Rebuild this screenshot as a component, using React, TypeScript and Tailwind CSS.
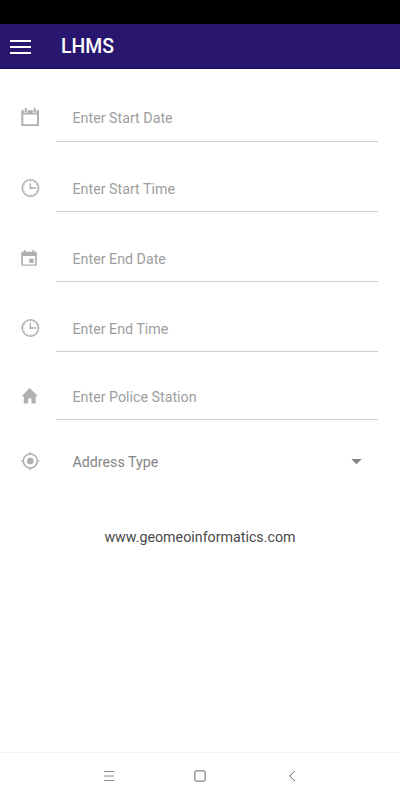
import type { ReactNode } from 'react';

const CalendarOutline = () => (
  <svg className="block h-[18px] w-[18px]" viewBox="0 0 18 18" fill="#b0b0b0">
    <path fillRule="evenodd" d="M.3 2.3H18V18H.3ZM2.3 6.5V16.2H16V6.5Z" />
    <path d="M2.8 1H6.8V5H2.8ZM11.6 1H15.6V5H11.6Z" fill="#fff" opacity=".7" />
    <path d="M3.8 0H5.8V4.2H3.8ZM12.6 0H14.6V4.2H12.6Z" />
  </svg>
);

const Clock = () => (
  <svg className="block h-[18px] w-[19px]" viewBox="0 0 19 18" fill="none" stroke="#b0b0b0">
    <circle cx="9.4" cy="9" r="8.2" strokeWidth="1.5" />
    <path d="M9.4 4.2V9H14.8" strokeWidth="1.4" />
    <circle cx="9.4" cy="9" r="1.1" fill="#b0b0b0" stroke="none" />
    <path
      d="M9.4 1.3V3M9.4 15V16.7M1.7 9H3.4M15.4 9H17.1M5.6 2.4L6.2 3.5M13.2 2.4L12.6 3.5M5.6 15.6L6.2 14.5M13.2 15.6L12.6 14.5M2.8 5.2L3.9 5.8M16 5.2L14.9 5.8M2.8 12.8L3.9 12.2M16 12.8L14.9 12.2"
      strokeWidth=".7"
    />
  </svg>
);

const CalendarEvent = () => (
  <svg className="block h-[16px] w-[16px]" viewBox="0 0 16 16" fill="#b0b0b0">
    <path
      fillRule="evenodd"
      d="M2.8 0H4.6V1.8H11.4V0H13.2V1.8H14.5Q15.8 1.8 15.8 3V14.5Q15.8 15.8 14.5 15.8H1.5Q.2 15.8 .2 14.5V3Q.2 1.8 1.5 1.8H2.8ZM1.9 6V14.4H14.1V6Z"
    />
    <path d="M8.2 8.7H12.7V13H8.2Z" />
  </svg>
);

const Home = () => (
  <svg className="block h-[16px] w-[17px]" viewBox="0 0 17 16" fill="#b0b0b0">
    <path d="M8.7 .1L17 8.2H14.7V15.4H10.5V10.4H7V15.4H2.8V8.2H.5Z" />
  </svg>
);

const Target = () => (
  <svg className="block h-[18px] w-[19px]" viewBox="0 0 19 18" fill="none" stroke="#b0b0b0">
    <circle cx="9.3" cy="9" r="7" strokeWidth="1.6" />
    <circle cx="9.3" cy="9" r="3.3" fill="#b0b0b0" stroke="none" />
    <path d="M9.3 0V2.4M9.3 15.6V18M.3 9H2.7M15.9 9H18.3" strokeWidth="1.6" />
  </svg>
);

function Field({ icon, label, size }: { icon: ReactNode; label: string; size: string }) {
  return (
    <div className={`flex pr-[22px] ${size}`}>
      <div className="w-[35px] shrink-0">{icon}</div>
      <div className="flex-1 border-b-[1.5px] border-[#cecece] pl-[16.5px] text-[#9e9e9e]">{label}</div>
    </div>
  );
}

export default function App() {
  return (
    <div className="flex h-[800px] w-[400px] flex-col bg-white font-['Roboto',sans-serif]">
      <div className="h-6 bg-black" />
      <header className="flex h-[45px] items-center border-b border-[#1b0b5e] bg-[#28166f] pl-[10px] text-white">
        <svg className="mt-[2px] h-[16px] w-[21px]" viewBox="0 0 21 16" fill="#fff">
          <path d="M0 1H21V3H0ZM0 7H21V9H0ZM0 13H21V15H0Z" />
        </svg>
        <h1 className="mt-[2px] ml-[30px] text-[19.4px] leading-6 font-medium">LHMS</h1>
      </header>

      <main className="flex flex-1 flex-col pt-[39px] pl-[21px] text-[14.25px] leading-5">
        <Field icon={<CalendarOutline />} label="Enter Start Date" size="h-[34px] mb-[37px]" />
        <Field icon={<Clock />} label="Enter Start Time" size="h-[33px] mb-[38px]" />
        <Field icon={<CalendarEvent />} label="Enter End Date" size="h-[32px] mb-[37px] leading-[18px]" />
        <Field icon={<Clock />} label="Enter End Time" size="h-[33px] mb-[36px]" />
        <Field icon={<Home />} label="Enter Police Station" size="h-[32px] mb-[32px] leading-[18px]" />
        <div className="flex text-[#858585]">
          <div className="w-[51.5px]">
            <Target />
          </div>
          <span className="flex-1">Address Type</span>
          <svg className="mt-[7px] mr-[38px] h-[6px] w-[11px]" viewBox="0 0 11 6" fill="#858585">
            <path d="M.3 0H10.7L5.5 5.2Z" />
          </svg>
        </div>
        <p className="mt-[55px] -ml-[21px] text-center text-[14.25px] text-[#4a4a4a]">www.geomeoinformatics.com</p>
      </main>

      <nav className="h-[48px] border-t border-[#f3f3f3]">
        <div className="flex h-[46px] items-center pl-[104px]">
          <svg className="h-[12px] w-[10px]" viewBox="0 0 10 12" stroke="#8a8a8a">
            <path d="M0 1.5H10M0 6H10M0 10.5H10" />
          </svg>
          <svg className="ml-[80px] h-[12px] w-[12px]" viewBox="0 0 12 12" fill="none" stroke="#858585">
            <rect x=".8" y=".8" width="10.4" height="10.4" rx="1.8" strokeWidth="1.2" />
          </svg>
          <svg className="ml-[83px] h-[12px] w-[7px]" viewBox="0 0 7 12" fill="none" stroke="#666">
            <path d="M6 .8L.8 6L6 11.2" />
          </svg>
        </div>
      </nav>
    </div>
  );
}
